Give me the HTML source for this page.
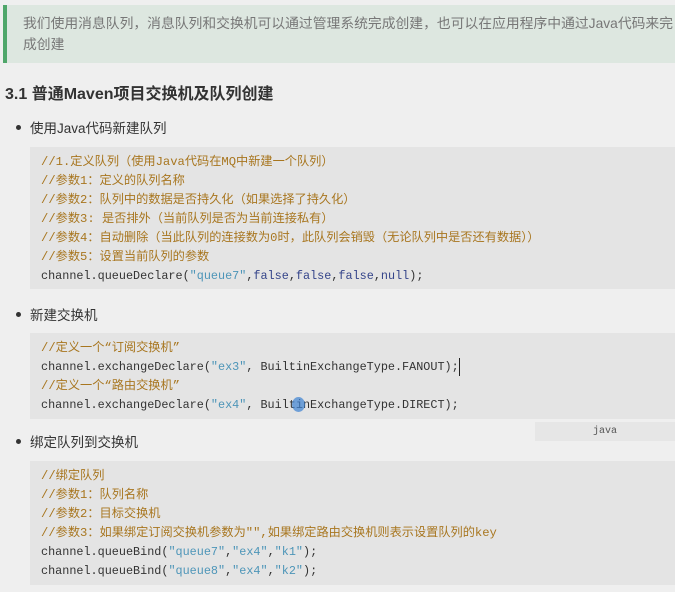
<!DOCTYPE html>
<html><head><meta charset="utf-8"><style>
*{margin:0;padding:0;box-sizing:border-box}
body{width:675px;height:592px;background:#efefef;position:relative;overflow:hidden;font-family:"Liberation Sans","Noto Sans CJK SC",sans-serif;color:#333}
.bq{position:absolute;left:3px;top:5px;width:672px;height:58px;background:#dde7e0;border-left:4px solid #4fa66a}
.bq p{position:absolute;left:16px;top:8px;width:652px;font-size:13.8px;line-height:21px;color:#777}
h3{position:absolute;left:5px;top:80px;font-size:16px;font-weight:bold;color:#333}
.li{position:absolute;left:30px;font-size:13.5px;color:#333}
.li:before{content:"";position:absolute;left:-14px;top:8px;width:5px;height:5px;border-radius:50%;background:#333}
.code{position:absolute;left:30px;width:645px;background:#e4e4e4;font-family:"Liberation Mono","Noto Sans CJK SC",monospace;font-size:11.8px;color:#333}
.code div{position:absolute;left:11px;white-space:pre;line-height:19px}
.c{color:#a8761f;font-size:12.2px}.s{color:#4d95b8}.k{color:#34448a}
.java{position:absolute;left:535px;top:422px;width:140px;height:19px;background:#e6e6e6;font-family:"Liberation Mono",monospace;font-size:10px;color:#555;text-align:center;line-height:19px}
</style></head><body>
<div class="bq"><p>我们使用消息队列，消息队列和交换机可以通过管理系统完成创建，也可以在应用程序中通过Java代码来完成创建</p></div>
<h3>3.1 普通Maven项目交换机及队列创建</h3>
<div class="li" style="top:117px">使用Java代码新建队列</div>
<div class="code" style="top:147px;height:142px">
<div style="top:6px"><span class="c">//1.定义队列（使用Java代码在MQ中新建一个队列）</span></div>
<div style="top:25px"><span class="c">//参数1：定义的队列名称</span></div>
<div style="top:44px"><span class="c">//参数2：队列中的数据是否持久化（如果选择了持久化）</span></div>
<div style="top:63px"><span class="c">//参数3: 是否排外（当前队列是否为当前连接私有）</span></div>
<div style="top:82px"><span class="c">//参数4：自动删除（当此队列的连接数为0时，此队列会销毁（无论队列中是否还有数据））</span></div>
<div style="top:101px"><span class="c">//参数5：设置当前队列的参数</span></div>
<div style="top:120px">channel.queueDeclare(<span class="s">"queue7"</span>,<span class="k">false</span>,<span class="k">false</span>,<span class="k">false</span>,<span class="k">null</span>);</div>
</div>
<div class="li" style="top:304px">新建交换机</div>
<div class="code" style="top:333px;height:86px">
<div style="top:6px"><span class="c">//定义一个“订阅交换机”</span></div>
<div style="top:25px">channel.exchangeDeclare(<span class="s">"ex3"</span>, BuiltinExchangeType.FANOUT);</div>
<div style="top:44px"><span class="c">//定义一个“路由交换机”</span></div>
<div style="top:63px">channel.exchangeDeclare(<span class="s">"ex4"</span>, BuiltinExchangeType.DIRECT);</div>
</div>
<div style="position:absolute;left:459px;top:358px;width:1px;height:18px;background:#222"></div>
<div style="position:absolute;left:292px;top:397px;width:13px;height:15px;border-radius:50%;background:rgba(60,130,210,0.7)"></div>
<div class="java">java</div>
<div class="li" style="top:431px">绑定队列到交换机</div>
<div class="code" style="top:461px;height:124px">
<div style="top:6px"><span class="c">//绑定队列</span></div>
<div style="top:25px"><span class="c">//参数1：队列名称</span></div>
<div style="top:44px"><span class="c">//参数2：目标交换机</span></div>
<div style="top:63px"><span class="c">//参数3：如果绑定订阅交换机参数为"",如果绑定路由交换机则表示设置队列的key</span></div>
<div style="top:82px">channel.queueBind(<span class="s">"queue7"</span>,<span class="s">"ex4"</span>,<span class="s">"k1"</span>);</div>
<div style="top:101px">channel.queueBind(<span class="s">"queue8"</span>,<span class="s">"ex4"</span>,<span class="s">"k2"</span>);</div>
</div>
</body></html>
